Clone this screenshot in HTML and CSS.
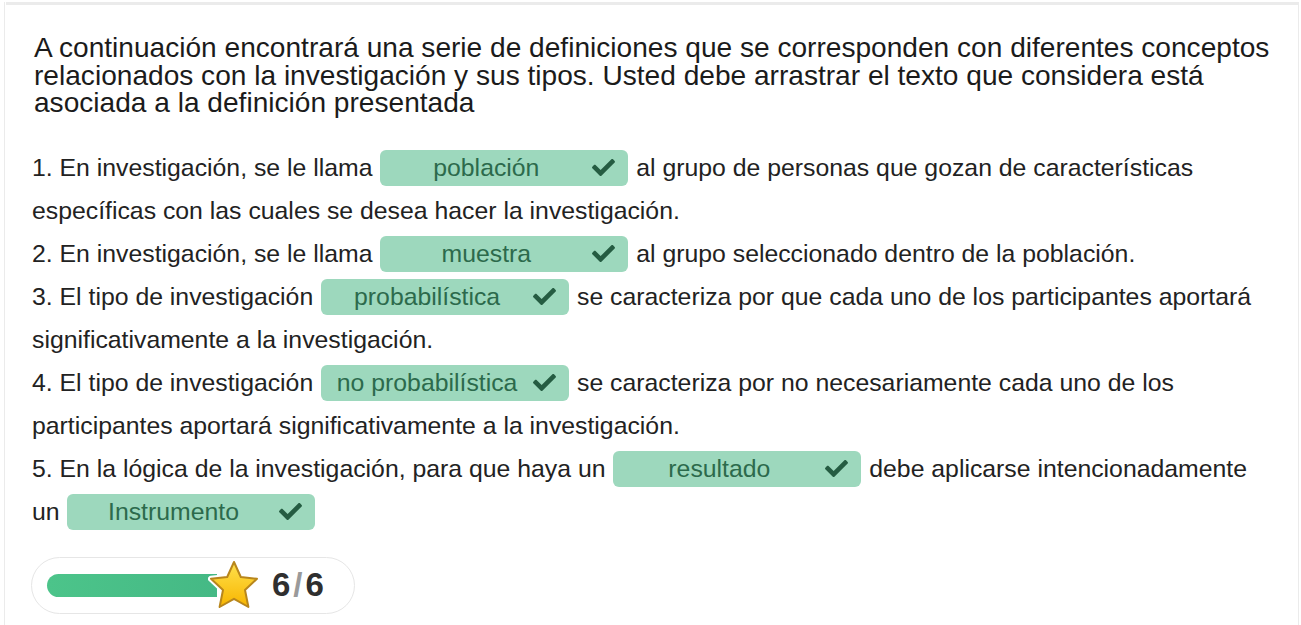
FILE: index.html
```html
<!DOCTYPE html>
<html lang="es">
<head>
    <meta charset="UTF-8">
    <title>Arrastrar palabras</title>
    <link rel="stylesheet" href="styles.css">
</head>
<body>
    <div class="frame">
        <div class="top-bar"></div>

        <div class="question">
            A continuación encontrará una serie de definiciones que se corresponden con diferentes conceptos relacionados con la investigación y sus tipos. Usted debe arrastrar el texto que considera está asociada a la definición presentada
        </div>

        <div class="task">
            <p>1. En investigación, se le llama <span class="chip"><span class="chip-text">población</span><svg class="check" viewBox="0 0 512 512"><path d="M173.9 439.4l-166.4-166.4c-10-10-10-26.2 0-36.2l36.2-36.2c10-10 26.2-10 36.2 0L192 312.7 432.1 72.6c10-10 26.2-10 36.2 0l36.2 36.2c10 10 10 26.2 0 36.2l-294.4 294.4c-10 10-26.2 10-36.2 0z"/></svg></span> al grupo de personas que gozan de características específicas con las cuales se desea hacer la investigación.</p>
            <p>2. En investigación, se le llama <span class="chip"><span class="chip-text">muestra</span><svg class="check" viewBox="0 0 512 512"><path d="M173.9 439.4l-166.4-166.4c-10-10-10-26.2 0-36.2l36.2-36.2c10-10 26.2-10 36.2 0L192 312.7 432.1 72.6c10-10 26.2-10 36.2 0l36.2 36.2c10 10 10 26.2 0 36.2l-294.4 294.4c-10 10-26.2 10-36.2 0z"/></svg></span> al grupo seleccionado dentro de la población.</p>
            <p>3. El tipo de investigación <span class="chip"><span class="chip-text">probabilística</span><svg class="check" viewBox="0 0 512 512"><path d="M173.9 439.4l-166.4-166.4c-10-10-10-26.2 0-36.2l36.2-36.2c10-10 26.2-10 36.2 0L192 312.7 432.1 72.6c10-10 26.2-10 36.2 0l36.2 36.2c10 10 10 26.2 0 36.2l-294.4 294.4c-10 10-26.2 10-36.2 0z"/></svg></span> se caracteriza por que cada uno de los participantes aportará significativamente a la investigación.</p>
            <p>4. El tipo de investigación <span class="chip"><span class="chip-text">no probabilística</span><svg class="check" viewBox="0 0 512 512"><path d="M173.9 439.4l-166.4-166.4c-10-10-10-26.2 0-36.2l36.2-36.2c10-10 26.2-10 36.2 0L192 312.7 432.1 72.6c10-10 26.2-10 36.2 0l36.2 36.2c10 10 10 26.2 0 36.2l-294.4 294.4c-10 10-26.2 10-36.2 0z"/></svg></span> se caracteriza por no necesariamente cada uno de los participantes aportará significativamente a la investigación.</p>
            <p>5. En la lógica de la investigación, para que haya un <span class="chip"><span class="chip-text">resultado</span><svg class="check" viewBox="0 0 512 512"><path d="M173.9 439.4l-166.4-166.4c-10-10-10-26.2 0-36.2l36.2-36.2c10-10 26.2-10 36.2 0L192 312.7 432.1 72.6c10-10 26.2-10 36.2 0l36.2 36.2c10 10 10 26.2 0 36.2l-294.4 294.4c-10 10-26.2 10-36.2 0z"/></svg></span> debe aplicarse intencionadamente un <span class="chip"><span class="chip-text">Instrumento</span><svg class="check" viewBox="0 0 512 512"><path d="M173.9 439.4l-166.4-166.4c-10-10-10-26.2 0-36.2l36.2-36.2c10-10 26.2-10 36.2 0L192 312.7 432.1 72.6c10-10 26.2-10 36.2 0l36.2 36.2c10 10 10 26.2 0 36.2l-294.4 294.4c-10 10-26.2 10-36.2 0z"/></svg></span></p>
        </div>

        <div class="score">
            <div class="score-bar"></div>
            <svg class="star" viewBox="0 0 52 50">
                <defs>
                    <linearGradient id="starFill" x1="0" y1="0" x2="0" y2="1">
                        <stop offset="0" stop-color="#ffe14d"/>
                        <stop offset="1" stop-color="#f7b500"/>
                    </linearGradient>
                </defs>
                <polygon points="26,2 32.8,17 49,18.8 37,30 40.4,47 26,38.8 11.6,47 15,30 3,18.8 19.2,17" fill="none" stroke="#fff" stroke-width="6" stroke-linejoin="round"/>
                <polygon points="26,2 32.8,17 49,18.8 37,30 40.4,47 26,38.8 11.6,47 15,30 3,18.8 19.2,17" fill="url(#starFill)" stroke="#b8861c" stroke-width="2" stroke-linejoin="round"/>
            </svg>
            <div class="score-text">6<span class="slash">/</span>6</div>
        </div>
    </div>
</body>
</html>
```

FILE: styles.css
```css
body {
    margin: 0;
    background-color: #fff;
    font-family: "Liberation Sans", Arial, sans-serif;
    color: #222;
}
.frame {
    margin: 0 2px 0 4px;
    height: 625px;
    border-left: 1px solid #ebebeb;
    border-right: 1px solid #ebebeb;
    box-sizing: border-box;
}
.top-bar {
    height: 3px;
    margin: 2px 0 0 1px;
    background-color: #ebebeb;
}
.question {
    padding: 29px 18px 0 29px;
    font-size: 28.1px;
    line-height: 27.5px;
    color: #1b1b1b;
}
.task {
    margin-top: 29px;
    padding: 0 25px 0 27px;
    font-size: 24.8px;
    line-height: 43px;
}
.task p {
    margin: 0;
}
.chip {
    display: inline-flex;
    align-items: center;
    box-sizing: border-box;
    width: 248px;
    height: 36px;
    margin: 0 1px;
    padding: 0 13px 0 0;
    vertical-align: middle;
    position: relative;
    top: -1px;
    background-color: #9dd8bd;
    border-radius: 6px;
    color: #2c6a4c;
    line-height: 36px;
}
.chip-text {
    flex: 1;
    text-align: center;
}
.check {
    width: 23px;
    height: 23px;
    fill: #255c42;
}
.score {
    display: inline-flex;
    align-items: center;
    margin: 24px 0 0 26px;
    height: 57px;
    padding: 0 30px 0 15px;
    border: 1px solid #e6e6e6;
    border-radius: 30px;
    box-sizing: border-box;
}
.score-bar {
    width: 170px;
    height: 23px;
    border-radius: 12px 0 0 12px;
    background: linear-gradient(to right, #4cc48a, #45b985);
}
.star {
    width: 52px;
    height: 50px;
    margin-left: -9px;
}
.score-text {
    margin-left: 12px;
    font-size: 33px;
    font-weight: bold;
    color: #2f2f2f;
}
.slash {
    margin: 0 3px;
    color: #9a9a9a;
}
```
